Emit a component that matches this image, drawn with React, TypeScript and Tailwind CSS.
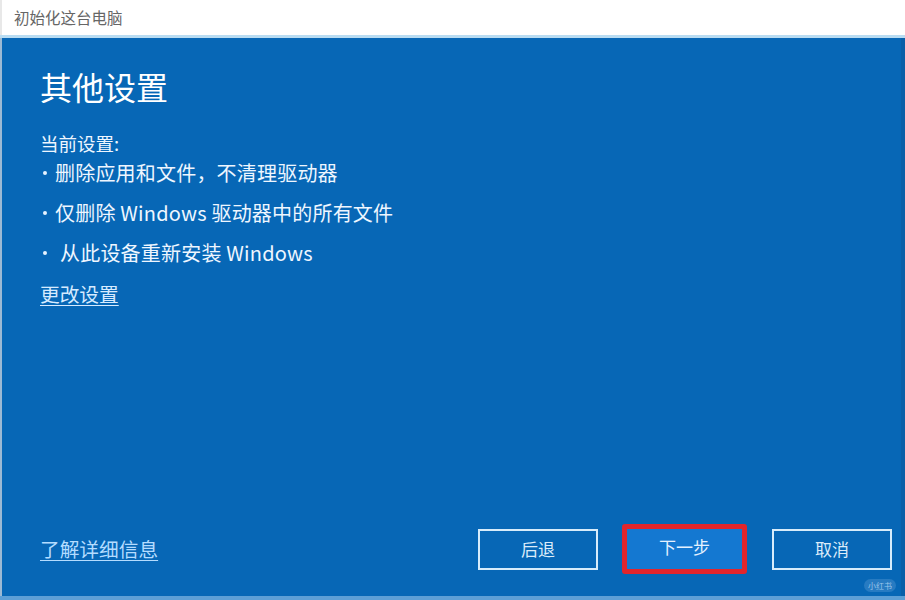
import { FC } from "react";

const font = { fontFamily: '"Noto Sans CJK SC", "Noto Sans", sans-serif' };

const items = [
  { text: "删除应用和文件，不清理驱动器", indent: false },
  { text: "仅删除 Windows 驱动器中的所有文件", indent: false },
  { text: "从此设备重新安装 Windows", indent: true },
];

const App: FC = () => {
  return (
    <div
      className="relative w-[905px] h-[600px] flex flex-col bg-white overflow-hidden"
      style={font}
    >
      {/* title bar */}
      <div className="h-[35px] flex items-center pl-[12px] text-[15.5px] text-[#666666] bg-white border-l-2 border-[#e8e8e8]">
        初始化这台电脑
      </div>
      <div className="h-[3px] bg-[#b9dcf2]" />

      {/* body */}
      <div className="flex-1 flex flex-col justify-between bg-[#0767b6] border-l-2 border-[#9cb9d4] border-r-[4px] border-r-[#0a5fa8] pl-[38px] pr-[9px] text-[#eef6ff]">
        <div className="flex flex-col">
          <h1 className="mt-[28px] h-[40px] leading-[40px] text-[32px] text-white">
            其他设置
          </h1>
          <p className="mt-[27px] h-[20px] leading-[20px] text-[18.5px]">
            当前设置:
          </p>
          <ul className="flex flex-col">
            {items.map((item, index) => (
              <li
                key={index}
                className="h-[40px] flex items-center text-[20px] tracking-[0.2px]"
              >
                <span className="ml-[3px] w-[4px] h-[4px] rounded-full bg-[#e6f2ff]" />
                <span className={item.indent ? "ml-[13px]" : "ml-[8px]"}>
                  {item.text}
                </span>
              </li>
            ))}
          </ul>
          <a className="mt-[1px] h-[40px] leading-[40px] text-[19.7px] text-[#d6ebff] underline underline-offset-[3px] w-fit">
            更改设置
          </a>
        </div>

        {/* footer */}
        <div className="flex items-center justify-between pb-[22px]">
          <a className="text-[19.7px] text-[#b4dcff] underline underline-offset-[3px]">
            了解详细信息
          </a>
          <div className="flex items-center">
            <button className="w-[120px] h-[41px] border-2 border-[#d7ecfb] text-[17px] text-[#dcecfa]">
              后退
            </button>
            <button className="ml-[24px] w-[125px] h-[50px] border-[5px] border-[#e2252c] rounded-[3px] bg-[#1478d1] text-[17px] text-[#e4f1ff] pb-[4px]">
              下一步
            </button>
            <button className="ml-[25px] w-[120px] h-[41px] border-2 border-[#d7ecfb] text-[17px] text-[#dcecfa]">
              取消
            </button>
          </div>
        </div>
      </div>
      <div className="h-[4px] bg-[#5d9fd6]" />

      {/* watermark */}
      <div className="absolute right-[9px] bottom-[8px] h-[13px] px-[4px] rounded-full bg-[#3d88c9]/60 text-[8px] leading-[13px] text-[#9cc6ea]">
        小红书
      </div>
    </div>
  );
};

export default App;
